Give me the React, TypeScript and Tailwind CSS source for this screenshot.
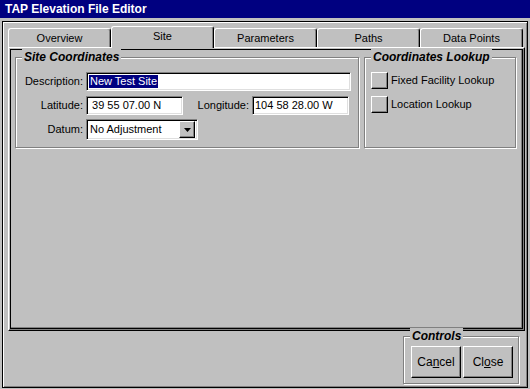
import React from 'react'

const sunken =
  'border border-t-[#808080] border-l-[#808080] border-r-white border-b-white shadow-[inset_1px_1px_0_#000,inset_-1px_-1px_0_#dfdfdf]'
const raised =
  'border border-t-white border-l-white border-r-black border-b-black shadow-[inset_-1px_-1px_0_#808080]'
const etched = 'border border-[#808080] shadow-[inset_1px_1px_0_#fff,1px_1px_0_#fff]'

const GroupBox: React.FC<{ title: string; className?: string; children?: React.ReactNode }> = ({
  title,
  className,
  children,
}) => (
  <div className={`relative ${etched} ${className ?? ''}`}>
    <span className="absolute left-[6px] top-[-9px] bg-[#c0c0c0] px-[2px] text-[12px] font-bold italic leading-[16px]">
      {title}
    </span>
    {children}
  </div>
)

const tabs = ['Overview', 'Site', 'Parameters', 'Paths', 'Data Points']

export default function App() {
  return (
    <div className="w-[530px] h-[389px] bg-[#c0c0c0] font-['Liberation_Sans',Arial,sans-serif] text-[11px] text-black flex flex-col overflow-hidden select-none">
      <div className="h-[18px] shrink-0 bg-[#000080] text-white text-[12px] font-bold pl-[5px] flex items-center">
        TAP Elevation File Editor
      </div>

      <div className="flex-1 mt-[3px] mx-[2px] mb-[1px] border border-black shadow-[inset_1px_1px_0_#fff,inset_-1px_-1px_0_#808080] flex flex-col pt-[4px] pl-[5px] pr-[2px]">
        {/* tabs */}
        <div className="flex items-end h-[21px] shrink-0">
          {tabs.map((t) =>
            t === 'Site' ? (
              <div
                key={t}
                className="relative z-10 w-[103px] h-[22px] mb-[-1px] bg-[#c0c0c0] border-l border-t border-r border-l-white border-t-white border-r-black shadow-[inset_-1px_0_0_#808080] rounded-t-[3px] flex items-center justify-center pb-[2px]"
              >
                {t}
              </div>
            ) : (
              <div
                key={t}
                className="w-[103px] h-[19px] border-l border-t border-r border-l-white border-t-white border-r-black shadow-[inset_-1px_0_0_#808080] rounded-t-[3px] flex items-center justify-center"
              >
                {t}
              </div>
            ),
          )}
        </div>

        {/* tab page */}
        <div className="h-[284px] shrink-0 border border-l-white border-t-white border-r-black border-b-black shadow-[inset_-1px_-1px_0_#808080] p-[1px]">
          <div className="h-full border border-black shadow-[inset_-1px_-1px_0_#808080] pt-[7px] pl-[4px] flex gap-[5px]">
            <GroupBox title="Site Coordinates" className="w-[344px] h-[91px]">
              <div className="pt-[14px] flex flex-col gap-[5px]">
                <div className="flex items-center">
                  <span className="w-[68px] text-right pr-[1px]">Description:</span>
                  <div className={`ml-[2px] w-[265px] h-[19px] bg-white ${sunken} flex items-center pl-[2px]`}>
                    <span className="bg-[#000080] text-white leading-[13px] px-[1px]">New Test Site</span>
                  </div>
                </div>
                <div className="flex items-center">
                  <span className="w-[68px] text-right pr-[1px]">Latitude:</span>
                  <div className={`ml-[2px] w-[97px] h-[19px] bg-white ${sunken} flex items-center pl-[2px]`}>
                    {'\u00a039 55 07.00 N'}
                  </div>
                  <span className="w-[68px] text-right pr-[2px]">Longitude:</span>
                  <div className={`ml-[1px] w-[97px] h-[19px] bg-white ${sunken} flex items-center pl-[2px]`}>
                    104 58 28.00 W
                  </div>
                </div>
                <div className="flex items-center mt-[-1px]">
                  <span className="w-[68px] text-right pr-[1px]">Datum:</span>
                  <div className={`ml-[2px] w-[112px] h-[21px] bg-white ${sunken} flex items-center pl-[3px] pr-[2px]`}>
                    <span className="flex-1">No Adjustment</span>
                    <div className={`w-[16px] h-[17px] bg-[#c0c0c0] ${raised} flex items-center justify-center`}>
                      <svg width="7" height="4" viewBox="0 0 7 4">
                        <path d="M0 0h7L3.5 4z" fill="#000" />
                      </svg>
                    </div>
                  </div>
                </div>
              </div>
            </GroupBox>

            <GroupBox title="Coordinates Lookup" className="w-[152px] h-[91px]">
              <div className="pt-[14px] pl-[6px] flex flex-col gap-[7px]">
                <div className="flex items-center gap-[3px]">
                  <div className={`w-[17px] h-[17px] ${raised}`} />
                  <span>Fixed Facility Lookup</span>
                </div>
                <div className="flex items-center gap-[3px]">
                  <div className={`w-[17px] h-[17px] ${raised}`} />
                  <span>Location Lookup</span>
                </div>
              </div>
            </GroupBox>
          </div>
        </div>

        {/* controls */}
        <div className="flex justify-end pr-[6px] mt-[5px]">
          <GroupBox title="Controls" className="w-[116px] h-[48px]">
            <div className="pt-[9px] pl-[7px] flex gap-[2px]">
              <button className={`w-[50px] h-[32px] ${raised} text-[12px]`}>
                Ca<span className="underline">n</span>cel
              </button>
              <button className={`w-[50px] h-[32px] ${raised} text-[12px]`}>
                Cl<span className="underline">o</span>se
              </button>
            </div>
          </GroupBox>
        </div>
      </div>
    </div>
  )
}
